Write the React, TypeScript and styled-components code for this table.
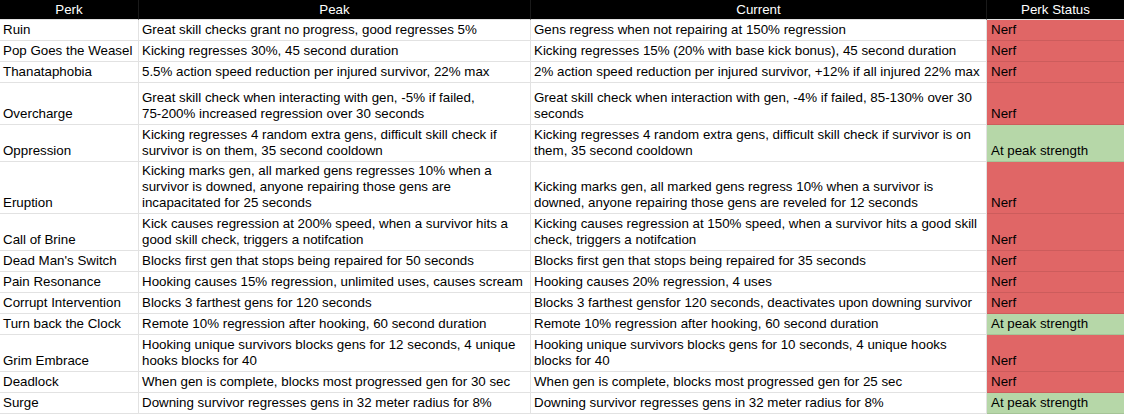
import React from "react";
import styled, { createGlobalStyle, css } from "styled-components";

type Status = "nerf" | "peak";

interface PerkRow {
  perk: string;
  peak: string;
  current: string;
  status: Status;
  height: number;
}

// line breaks kept where the sheet wraps them
const rows: PerkRow[] = [
  {
    perk: "Ruin",
    peak: "Great skill checks grant no progress, good regresses 5%",
    current: "Gens regress when not repairing at 150% regression",
    status: "nerf",
    height: 21,
  },
  {
    perk: "Pop Goes the Weasel",
    peak: "Kicking regresses 30%, 45 second duration",
    current: "Kicking regresses 15% (20% with base kick bonus), 45 second duration",
    status: "nerf",
    height: 21,
  },
  {
    perk: "Thanataphobia",
    peak: "5.5% action speed reduction per injured survivor, 22% max",
    current:
      "2% action speed reduction per injured survivor, +12% if all injured 22% max",
    status: "nerf",
    height: 21,
  },
  {
    perk: "Overcharge",
    peak: "Great skill check when interacting with gen, -5% if failed,\n75-200% increased regression over 30 seconds",
    current:
      "Great skill check when interaction with gen, -4% if failed, 85-130% over 30 seconds",
    status: "nerf",
    height: 42,
  },
  {
    perk: "Oppression",
    peak: "Kicking regresses 4 random extra gens, difficult skill check if survivor is on them, 35 second cooldown",
    current:
      "Kicking regresses 4 random extra gens, difficult skill check if survivor is on them, 35 second cooldown",
    status: "peak",
    height: 37,
  },
  {
    perk: "Eruption",
    peak: "Kicking marks gen, all marked gens regresses 10% when a survivor is downed, anyone repairing those gens are incapacitated for 25 seconds",
    current:
      "Kicking marks gen, all marked gens regress 10% when a survivor is downed, anyone repairing those gens are reveled for 12 seconds",
    status: "nerf",
    height: 52,
  },
  {
    perk: "Call of Brine",
    peak: "Kick causes regression at 200% speed, when a survivor hits a good skill check, triggers a notifcation",
    current:
      "Kicking causes regression at 150% speed, when a survivor hits a good skill check, triggers a notifcation",
    status: "nerf",
    height: 37,
  },
  {
    perk: "Dead Man's Switch",
    peak: "Blocks first gen that stops being repaired for 50 seconds",
    current: "Blocks first gen that stops being repaired for 35 seconds",
    status: "nerf",
    height: 21,
  },
  {
    perk: "Pain Resonance",
    peak: "Hooking causes 15% regression, unlimited uses, causes scream",
    current: "Hooking causes 20% regression, 4 uses",
    status: "nerf",
    height: 21,
  },
  {
    perk: "Corrupt Intervention",
    peak: "Blocks 3 farthest gens for 120 seconds",
    current:
      "Blocks 3 farthest gensfor 120 seconds, deactivates upon downing survivor",
    status: "nerf",
    height: 21,
  },
  {
    perk: "Turn back the Clock",
    peak: "Remote 10% regression after hooking, 60 second duration",
    current: "Remote 10% regression after hooking, 60 second duration",
    status: "peak",
    height: 21,
  },
  {
    perk: "Grim Embrace",
    peak: "Hooking unique survivors blocks gens for 12 seconds, 4 unique hooks blocks for 40",
    current:
      "Hooking unique survivors blocks gens for 10 seconds, 4 unique hooks blocks for 40",
    status: "nerf",
    height: 37,
  },
  {
    perk: "Deadlock",
    peak: "When gen is complete, blocks most progressed gen for 30 sec",
    current: "When gen is complete, blocks most progressed gen for 25 sec",
    status: "nerf",
    height: 21,
  },
  {
    perk: "Surge",
    peak: "Downing survivor regresses gens in 32 meter radius for 8%",
    current: "Downing survivor regresses gens in 32 meter radius for 8%",
    status: "peak",
    height: 21,
  },
];

const statusLabel: Record<Status, string> = {
  nerf: "Nerf",
  peak: "At peak strength",
};

const GlobalStyle = createGlobalStyle`
  html, body {
    margin: 0;
    padding: 0;
    background: #ffffff;
  }
  body {
    font-family: "Liberation Sans", Arial, sans-serif;
    font-size: 13.33px;
    color: #000000;
  }
`;

const Sheet = styled.div`
  width: 1124px;
  display: flex;
  flex-direction: column;
`;

const Row = styled.div<{ $height: number }>`
  display: grid;
  grid-template-columns: 139px 392px 456px 1fr;
  height: ${(p) => p.$height}px;
`;

const HeaderCell = styled.div`
  background: #000000;
  color: #ffffff;
  display: flex;
  align-items: center;
  justify-content: center;
  border-bottom: 1px solid #e2e2e2;
  border-right: 1px solid #1a1a1a;
  line-height: 16px;
  &:last-child {
    border-right: none;
  }
`;

const Cell = styled.div`
  display: flex;
  align-items: flex-end;
  padding: 0 3px 2px 3px;
  line-height: 16px;
  white-space: pre-line;
  border-right: 1px solid #e2e2e2;
  border-bottom: 1px solid #e2e2e2;
  overflow: hidden;
`;

const StatusCell = styled(Cell)<{ $status: Status }>`
  border-right: none;
  padding-left: 4px;
  ${(p) =>
    p.$status === "nerf"
      ? css`
          background: #e06666;
          border-bottom-color: #cc5c5c;
        `
      : css`
          background: #b6d7a8;
          border-bottom-color: #a5c497;
        `}
`;

export default function App() {
  return (
    <>
      <GlobalStyle />
      <Sheet>
        <Row $height={20}>
          <HeaderCell>Perk</HeaderCell>
          <HeaderCell>Peak</HeaderCell>
          <HeaderCell>Current</HeaderCell>
          <HeaderCell>Perk Status</HeaderCell>
        </Row>
        {rows.map((r) => (
          <Row key={r.perk} $height={r.height}>
            <Cell>{r.perk}</Cell>
            <Cell>{r.peak}</Cell>
            <Cell>{r.current}</Cell>
            <StatusCell $status={r.status}>{statusLabel[r.status]}</StatusCell>
          </Row>
        ))}
      </Sheet>
    </>
  );
}
